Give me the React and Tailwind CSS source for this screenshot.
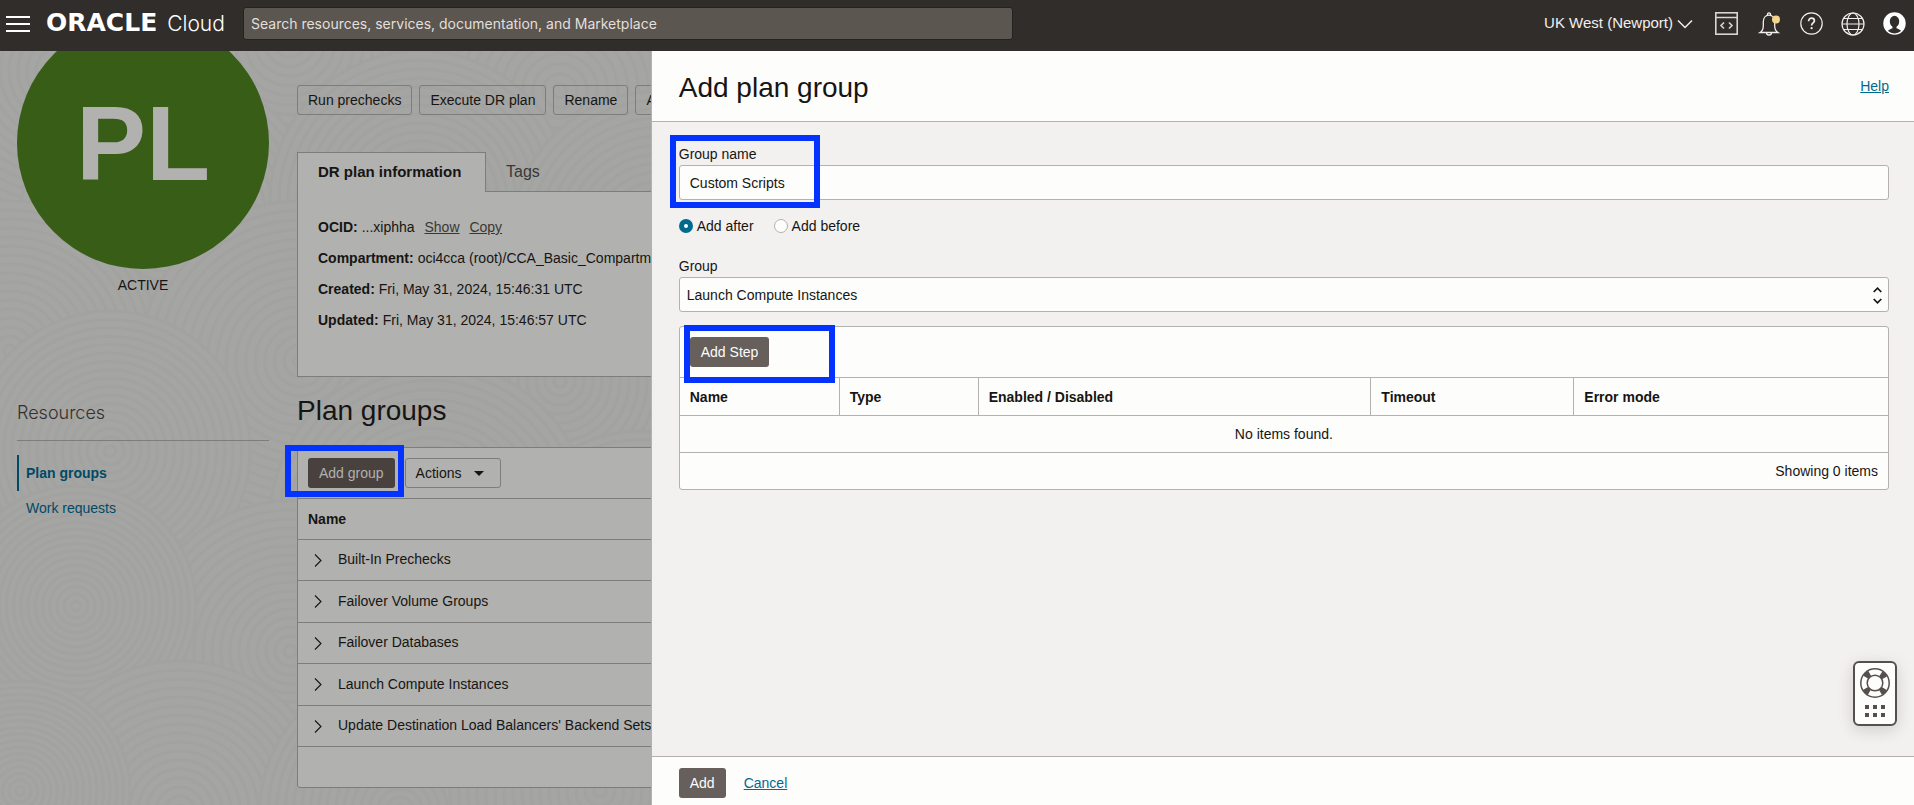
import React, { useState } from 'react';

const PLAN_GROUPS = [
  'Built-In Prechecks',
  'Failover Volume Groups',
  'Failover Databases',
  'Launch Compute Instances',
  "Update Destination Load Balancers' Backend Sets"
];

const SWIRLS = [
  [60, 20, 150], [290, -10, 160], [560, 40, 170], [170, 170, 150], [420, 150, 150], [660, 190, 150],
  [10, 300, 150], [300, 310, 160], [560, 330, 150], [110, 400, 140], [430, 470, 160], [290, 600, 150],
  [640, 520, 140], [76, 555, 120], [180, 760, 150], [20, 740, 110], [400, 760, 140], [600, 740, 150]
];

const RINGS = [1, 0.94, 0.88, 0.82, 0.76, 0.7, 0.64, 0.58, 0.52, 0.46, 0.4, 0.34, 0.28, 0.22, 0.16, 0.1, 0.04];

const outlineBtn = 'h-[30px] shrink-0 rounded-[3px] border border-[#7f7d7b] px-2.5 text-sm whitespace-nowrap';
const darkBtn = 'h-[30px] shrink-0 rounded-[3px] bg-[#665f5b] px-[11px] text-sm whitespace-nowrap text-[#fdfdfb]';
const fieldBox = 'h-[35px] w-full rounded-[3px] border border-[#b5b1ad] bg-[#fdfdfb] text-sm';

function TopBar() {
  return (
    <header className="flex h-[51px] shrink-0 items-center bg-[#312d2a] pb-3 pr-2 pl-1.5 text-[#f1efed]">
      <button aria-label="Menu" className="mt-2 flex w-6 shrink-0 flex-col gap-[5px]">
        <span className="h-0.5 w-full bg-white" />
        <span className="h-0.5 w-full bg-white" />
        <span className="h-0.5 w-full bg-white" />
      </button>
      <a href="#home" className="mt-2 ml-4 flex w-[197px] shrink-0 items-baseline gap-2.5 text-white">
        <span className="font-['DejaVu_Sans'] text-[25px] leading-6 font-bold">ORACLE</span>
        <span className="font-['Inter'] text-[21px] leading-6 font-light">Cloud</span>
      </a>
      <input
        type="search"
        aria-label="Search"
        placeholder="Search resources, services, documentation, and Marketplace"
        className="mt-2 h-[33px] w-[40.5%] rounded-[3px] border border-[#24211f] bg-[#5b5650] px-[7px] font-['Inter'] text-sm placeholder-[#e2dfdc] outline-none"
      />
      <div className="mt-2 ml-auto flex items-center">
        <button className="flex items-center gap-1 text-[15px]">
          UK West (Newport)
          <svg width="16" height="10" viewBox="0 0 16 10" fill="none" stroke="currentColor" strokeWidth="1.5"><path d="M1 1.5l7 7 7-7" /></svg>
        </button>
        <button aria-label="Developer tools" className="ml-[22px]">
          <svg width="23" height="23" viewBox="0 0 23 23" fill="none" stroke="#d8d6d4" strokeWidth="1.6">
            <rect x="0.8" y="0.8" width="21.4" height="21.4" />
            <path d="M1 5.5h21M9 10.5l-3 3 3 3M14 10.5l3 3-3 3" />
          </svg>
        </button>
        <button aria-label="Notifications" className="ml-5">
          <svg width="24" height="24" viewBox="0 0 24 24" fill="none" stroke="currentColor" strokeWidth="1.3">
            <path d="M2 20.5c2.5-1.5 3.3-3.5 3.3-6.5V10C5.3 6 7.5 3.2 11 3.2s5.7 2.8 5.7 6.8v4c0 3 .8 5 3.3 6.5zM9.5 3.2C9.3 1.5 10 1 11 1s1.7.5 1.5 2.2M8.500 20.700c0 1.500 1 2.300 2.500 2.300s2.500-.8 2.500-2.300" />
            <circle cx="18" cy="7.5" r="4" fill="#f7d48b" stroke="none" />
          </svg>
        </button>
        <button aria-label="Help menu" className="ml-[18px]">
          <svg width="23" height="23" viewBox="0 0 23 23" fill="none" stroke="currentColor" strokeWidth="1.2">
            <circle cx="11.5" cy="11.5" r="10.7" />
            <path strokeWidth="1.7" d="M8.6 9.2c0-1.9 1.2-3 2.9-3s2.9 1 2.9 2.6c0 2.2-2.8 2.2-2.8 4.8" />
            <circle cx="11.6" cy="16.2" r="1.1" fill="currentColor" stroke="none" />
          </svg>
        </button>
        <button aria-label="Language" className="ml-[18px]">
          <svg width="24" height="24" viewBox="0 0 24 24" fill="none" stroke="currentColor" strokeWidth="1.2">
            <circle cx="12" cy="12" r="11" />
            <ellipse cx="12" cy="12" rx="6" ry="11" />
            <path d="M1 12h22M3 6.5h18M3 17.5h18" />
          </svg>
        </button>
        <button aria-label="Profile" className="ml-[18px]">
          <svg width="23" height="23" viewBox="0 0 23 23">
            <circle cx="11.5" cy="11.5" r="11.2" fill="#fff" />
            <ellipse cx="11.5" cy="9.5" rx="4.7" ry="5.7" fill="#312d2a" />
            <path d="M9.5 13h4v3.2c1.8.8 3.7 1.3 4.5 2.8a9.8 9.8 0 0 1-13 0c.8-1.5 2.7-2 4.5-2.800z" fill="#312d2a" />
          </svg>
        </button>
      </div>
    </header>
  );
}

function Swirls() {
  return (
    <svg className="absolute inset-0 h-full w-full" aria-hidden="true">
      {SWIRLS.map(([x, y, r], i) => (
        <g key={i} fill="#a5a5a3" stroke="#a2a2a0" strokeWidth="3">
          {RINGS.map(k => <circle key={k} cx={x} cy={y} r={r * k} />)}
        </g>
      ))}
    </svg>
  );
}

function Marker({ className }) {
  return <span className={`pointer-events-none absolute z-10 border-[6px] border-[#0433ff] ${className}`} />;
}

function InfoRow({ label, children }) {
  return (
    <div className="flex gap-1 leading-[31px] whitespace-nowrap">
      <dt className="font-bold">{label}:</dt>
      <dd>{children}</dd>
    </div>
  );
}

function PlanPage() {
  return (
    <main className="relative w-[34%] shrink-0 overflow-hidden bg-[#a5a5a3] text-[#161513]">
      <Swirls />
      {/* page is scrolled a little under the top bar */}
      <div className="relative -mt-[34px] flex gap-7 pl-[17px]">
        <aside className="w-[252px] shrink-0">
          <div className="flex h-[252px] items-center justify-center rounded-full bg-[#385d17] text-[105px] leading-none font-bold text-[#b1b1af]">PL</div>
          <p className="mt-1.5 text-center text-sm">ACTIVE</p>
          <h2 className="mt-26 border-b border-[#7f7d7b] pb-[13px] font-['Inter'] text-lg leading-7 font-light text-[#33302e]">Resources</h2>
          <nav className="mt-3.5 flex flex-col text-sm text-[#004a66]">
            <a href="#groups" className="border-l-2 border-[#004a66] pl-[7px] leading-9 font-bold">Plan groups</a>
            <a href="#requests" className="pl-[9px] leading-[34px]">Work requests</a>
          </nav>
        </aside>

        <div className="w-[1600px] shrink-0">
          <div className="mt-[68px] flex gap-[7px]">
            <button className={outlineBtn}>Run prechecks</button>
            <button className={outlineBtn}>Execute DR plan</button>
            <button className={outlineBtn}>Rename</button>
            <button className={outlineBtn}>Add tags</button>
          </div>

          <div className="mt-[37px] flex">
            <button className="h-10 w-[189px] border border-b-0 border-[#7f7d7b] bg-[#b1b1af] px-5 text-left text-[15px] font-bold">DR plan information</button>
            <button className="h-10 flex-1 border-b border-[#7f7d7b] px-5 text-left text-base text-[#3a3835]">Tags</button>
          </div>
          <dl className="h-[185px] border border-t-0 border-[#7f7d7b] bg-[#b1b1af] px-5 pt-5 text-sm">
            <InfoRow label="OCID">
              ...xiphha <a href="#show" className="ml-1.5 text-[#3a3835] underline">Show</a> <a href="#copy" className="ml-1.5 text-[#3a3835] underline">Copy</a>
            </InfoRow>
            <InfoRow label="Compartment">oci4cca (root)/CCA_Basic_Compartment</InfoRow>
            <InfoRow label="Created">Fri, May 31, 2024, 15:46:31 UTC</InfoRow>
            <InfoRow label="Updated">Fri, May 31, 2024, 15:46:57 UTC</InfoRow>
          </dl>

          <h2 className="mt-4 text-[28px] leading-9">Plan groups</h2>
          <div className="mt-[18px] rounded-[3px] border border-[#7f7d7b] bg-[#b1b1af]">
            <div className="relative flex h-[50px] items-center gap-2.5 px-2.5">
              <Marker className="-top-[3px] -left-[13px] h-[52px] w-[119px]" />
              <button className="h-[30px] rounded-[3px] bg-[#48413d] px-[11px] text-sm text-[#b1b1af]">Add group</button>
              <button className={`${outlineBtn} flex items-center gap-3 pr-4`}>
                Actions
                <svg width="10" height="5" viewBox="0 0 10 5"><path d="M0 0h10L5 5z" fill="#161513" /></svg>
              </button>
            </div>
            <table className="w-full text-left text-sm">
              <thead>
                <tr className="h-[41px] border-y border-[#7f7d7b]"><th className="px-2.5 font-bold">Name</th></tr>
              </thead>
              <tbody>
                {PLAN_GROUPS.map(name => (
                  <tr key={name} className="h-[41px] border-b border-[#7f7d7b] even:h-[42px]">
                    <td className="px-4 pb-0.5">
                      <span className="flex items-center gap-4">
                        <svg className="mt-0.5" width="8" height="13" viewBox="0 0 8 13" fill="none" stroke="#161513" strokeWidth="1.1"><path d="M1 .5l6 6-6 6" /></svg>
                        {name}
                      </span>
                    </td>
                  </tr>
                ))}
              </tbody>
            </table>
            <div className="h-10" />
          </div>
        </div>
      </div>
    </main>
  );
}

function Radio({ label, checked, onChange }) {
  return (
    <label className="flex items-center gap-1">
      <input
        type="radio"
        name="position"
        checked={checked}
        onChange={onChange}
        className="h-3.5 w-3.5 appearance-none rounded-full border border-[#b5b1ad] bg-[#fdfdfb] checked:border-[5px] checked:border-[#006b8f]"
      />
      {label}
    </label>
  );
}

function HelpWidget() {
  return (
    <button aria-label="Support" className="absolute right-[17px] bottom-[30px] flex h-[65px] w-11 flex-col items-center rounded-md border-2 border-[#55504c] bg-[#fdfdfb] pt-[5px] shadow-[0_4px_16px_rgba(0,0,0,0.15)]">
      <svg width="30" height="50" viewBox="0 0 30 50" fill="none" stroke="#55504c">
        {/* life ring with its four bands on the diagonals */}
        <circle cx="15" cy="15" r="11" strokeWidth="6" strokeDasharray="5.500 11.780" strokeDashoffset="-5.890" />
        <circle cx="15" cy="15" r="14.2" strokeWidth="1.5" />
        <circle cx="15" cy="15" r="7.8" strokeWidth="1.5" />
        <path fill="#55504c" stroke="none" d="M5 37h4v4H5zM13 37h4v4h-4zM21 37h4v4h-4zM5 45h4v4H5zM13 45h4v4h-4zM21 45h4v4h-4z" />
      </svg>
    </button>
  );
}

function AddGroupDrawer() {
  const [groupName, setGroupName] = useState('Custom Scripts');
  const [position, setPosition] = useState('after');
  const [group, setGroup] = useState('Launch Compute Instances');

  return (
    <section className="flex min-w-0 flex-1 flex-col border-l border-[#b5b1ad] bg-[#f3f1f0]">
      <div className="flex h-[71px] shrink-0 items-center justify-between border-b border-[#b5b1ad] bg-[#fdfdfb] pr-[25px] pl-[27px]">
        <h1 className="pt-1 text-[28px] leading-9">Add plan group</h1>
        <a href="#help" className="text-sm text-[#006b8f] underline">Help</a>
      </div>

      <div className="relative min-h-0 flex-1 pt-[21px] pr-[25px] pl-[27px] text-sm">
        <div className="relative">
          <Marker className="-top-2 -left-[9px] h-[73px] w-[150px]" />
          <label htmlFor="group-name" className="block leading-[22px]">Group name</label>
          <input
            id="group-name"
            value={groupName}
            onChange={e => setGroupName(e.target.value)}
            className={`${fieldBox} px-2.5`}
          />
        </div>

        <div className="mt-4 flex gap-5 leading-5">
          <Radio label="Add after" checked={position === 'after'} onChange={() => setPosition('after')} />
          <Radio label="Add before" checked={position === 'before'} onChange={() => setPosition('before')} />
        </div>

        <label htmlFor="group" className="mt-[19px] block leading-[22px]">Group</label>
        <div className="relative">
          <select id="group" value={group} onChange={e => setGroup(e.target.value)} className={`${fieldBox} appearance-none px-[7px]`}>
            {PLAN_GROUPS.map(name => <option key={name}>{name}</option>)}
          </select>
          <svg className="pointer-events-none absolute top-[10px] right-[7px]" width="9" height="17" viewBox="0 0 9 17" fill="none" stroke="#161513" strokeWidth="1.7">
            <path d="M.7 5l3.800-3.800L8.300 5M.7 12l3.800 3.800L8.300 12" />
          </svg>
        </div>

        <div className="mt-3.5 rounded-[3px] border border-[#b5b1ad] bg-[#fdfdfb]">
          <div className="relative flex h-[50px] items-center px-2.5">
            <Marker className="-top-0.5 left-1 h-[58px] w-[151px]" />
            <button className={darkBtn}>Add Step</button>
          </div>
          <table className="w-full table-fixed text-left">
            <thead>
              <tr className="h-[38px] border-y border-[#b5b1ad]">
                <th className="w-[13.2%] border-r border-[#b5b1ad] px-2.5">Name</th>
                <th className="w-[11.5%] border-r border-[#b5b1ad] px-2.5">Type</th>
                <th className="w-[32.5%] border-r border-[#b5b1ad] px-2.5">Enabled / Disabled</th>
                <th className="w-[16.8%] border-r border-[#b5b1ad] px-2.5">Timeout</th>
                <th className="px-2.5">Error mode</th>
              </tr>
            </thead>
            <tbody>
              <tr className="h-[37px] border-b border-[#b5b1ad]"><td colSpan={5} className="text-center">No items found.</td></tr>
              <tr className="h-9"><td colSpan={5} className="px-2.5 text-right">Showing 0 items</td></tr>
            </tbody>
          </table>
        </div>
        <HelpWidget />
      </div>

      <div className="flex h-[49px] shrink-0 items-center gap-[18px] border-t border-[#b5b1ad] bg-[#fdfdfb] pt-1 pl-[27px]">
        <button className={darkBtn}>Add</button>
        <a href="#cancel" className="text-sm text-[#006b8f] underline">Cancel</a>
      </div>
    </section>
  );
}

export default function App() {
  return (
    <div className="flex h-screen flex-col overflow-hidden font-['Liberation_Sans',Arial,sans-serif] text-[#161513]">
      <TopBar />
      <div className="flex min-h-0 flex-1">
        <PlanPage />
        <AddGroupDrawer />
      </div>
    </div>
  );
}
